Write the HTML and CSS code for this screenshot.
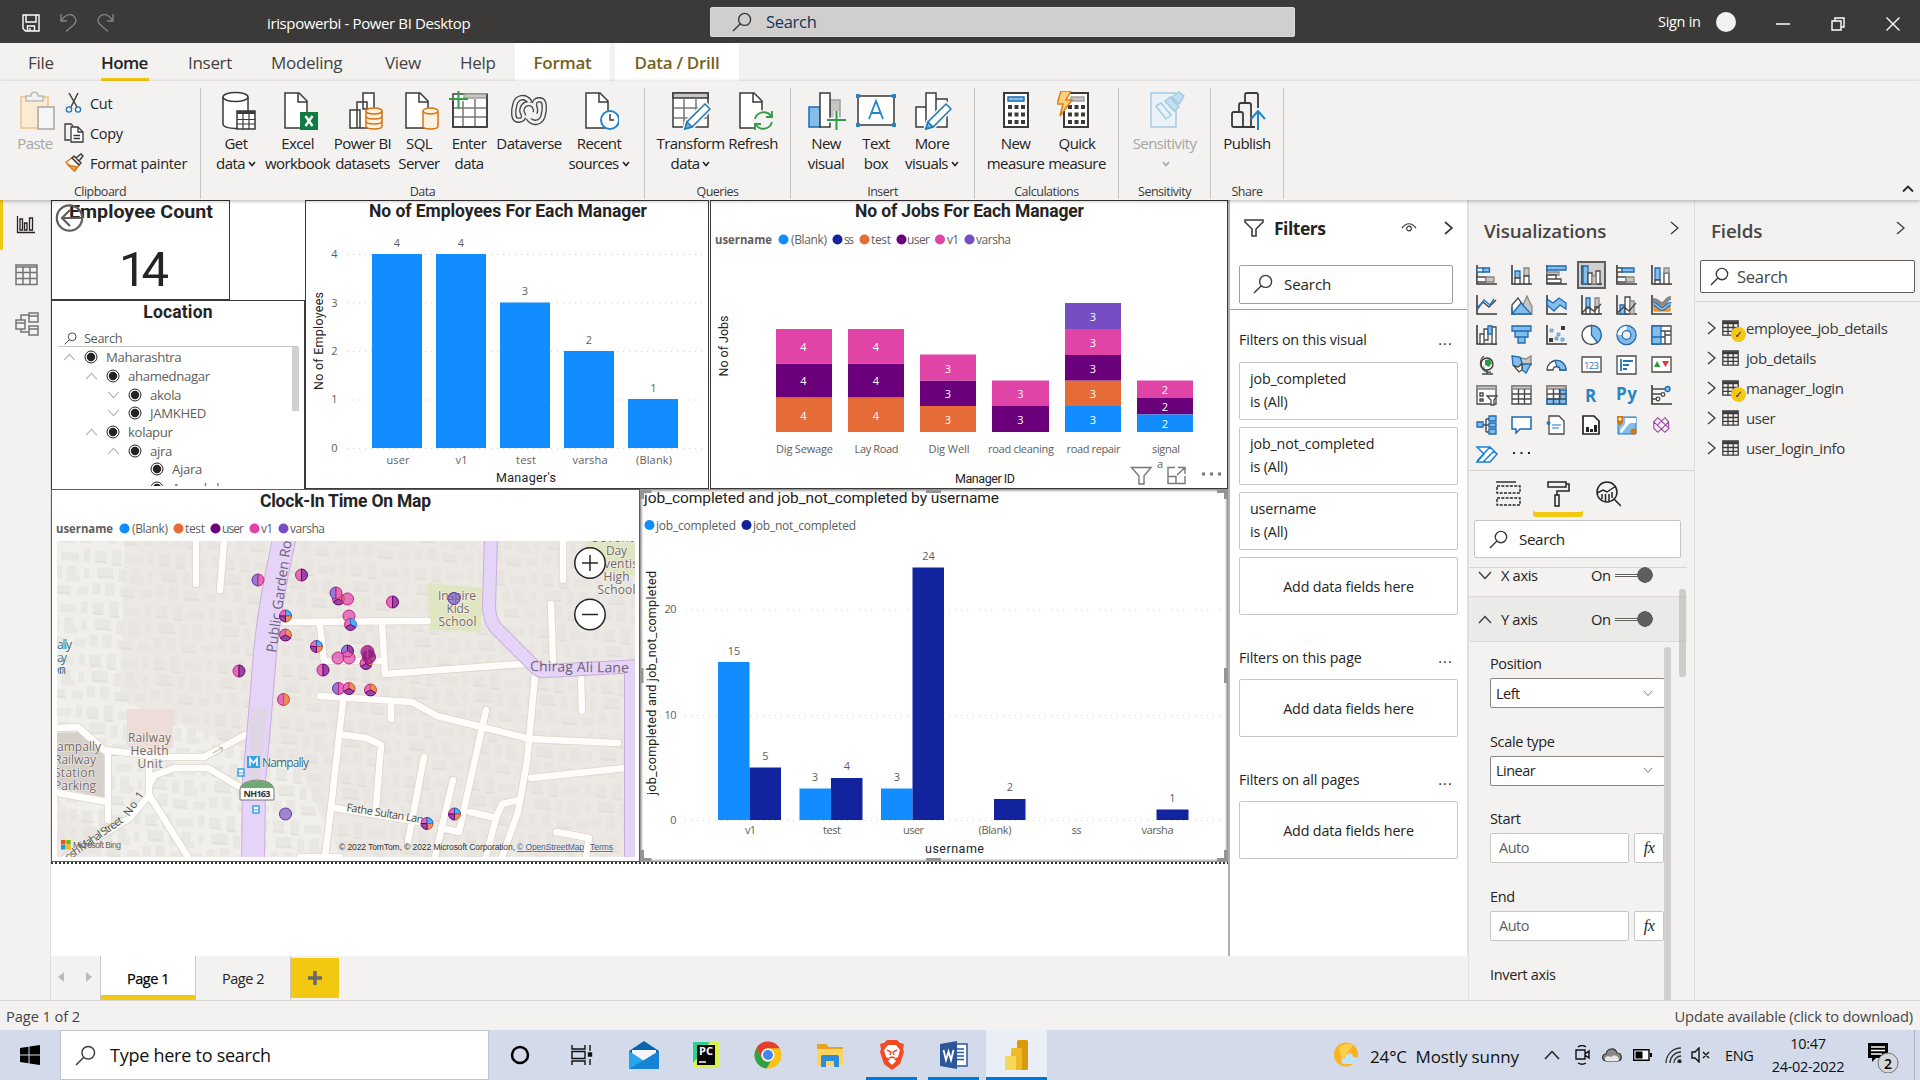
FILE: index.html
```html
<!DOCTYPE html>
<html lang="en">
<head>
<meta charset="utf-8">
<title>irispowerbi - Power BI Desktop</title>
<link rel="stylesheet" href="styles.css">
</head>
<body>
<svg class="defs" width="0" height="0">
  <defs>
    <symbol id="search" viewBox="0 0 20 20"><path d="M1 19L8.6 11.4" /><circle cx="12.6" cy="7.4" r="6" /></symbol>
    <symbol id="right" viewBox="0 0 9 14"><path d="M1 1L8 7L1 13"/></symbol>
    <symbol id="up" viewBox="0 0 14 9"><path d="M1 8L7 1.5L13 8"/></symbol>
    <symbol id="down" viewBox="0 0 14 9"><path d="M1 1L7 7.5L13 1"/></symbol>
    <symbol id="radio" viewBox="0 0 14 14"><circle cx="7" cy="7" r="6" fill="#fff" stroke="#252423" stroke-width="1"/><circle cx="7" cy="7" r="4.2" fill="#252423" stroke="none"/></symbol>
    <symbol id="table" viewBox="0 0 17 16"><path d="M.8 .8H16.2V15.2H.8ZM.8 3.6H16.2M.8 7.5H16.2M.8 11.4H16.2M6 3.6V15M11.2 3.6V15"/><path d="M1 2.2H16" stroke-width="2"/></symbol>
    <symbol id="page" viewBox="0 0 40 40"><path d="M7 2H21L29 10V37H7Z" fill="#fff"/><path d="M20 2V11H29"/></symbol>
    <symbol id="axes" viewBox="0 0 21 20"><path d="M1 0V19H21" stroke="#3b3a39" stroke-width="1.6" fill="none"/></symbol>
    <pattern id="blocks" x="57" y="541" width="64" height="52" patternUnits="userSpaceOnUse" patternTransform="rotate(3)">
      <path d="M3 4h11v10h-11zM20 2h9v14h-9zM34 7h17v8h-17zM56 3h6v12h-6zM6 20h16v9h-16zM28 21h7v13h-7zM40 20h9v9h4v7h-13zM57 22h5v10h-5zM2 36h8v11h-8zM15 35h9v13h-9zM30 40h14v7h-14zM51 41h11v8h-11z" fill="#e7e4de"/>
      <path d="M3 14h11l2 2h-11zM20 16h9l2 2h-9zM6 29h16l2 2h-16zM30 47h14l2 2h-14z" fill="#dedad4"/>
    </pattern>
    <g id="p-v1"><circle r="6" fill="#e044a7" fill-opacity=".7" stroke="#c02287"/></g>
    <g id="p-varsha"><circle r="6" fill="#744ec2" fill-opacity=".65" stroke="#5833a4"/></g>
    <g id="p-v1user"><path d="M0-6A6 6 0 0 0 0 6Z" fill="#e66bb6" stroke="#b52580"/><path d="M0-6A6 6 0 0 1 0 6Z" fill="#97489f" stroke="#6b007b"/></g>
    <g id="p-vv"><path d="M0-6A6 6 0 0 0 0 6Z" fill="#9878d0" stroke="#5833a4"/><path d="M0-6A6 6 0 0 1 0 6Z" fill="#e66bb6" stroke="#b52580"/></g>
    <g id="p-vt"><path d="M0-6A6 6 0 0 0 0 6Z" fill="#e66bb6" stroke="#b52580"/><path d="M0-6A6 6 0 0 1 0 6Z" fill="#ec8c62" stroke="#c65425"/></g>
    <g id="p-tri"><path d="M0 0V-6A6 6 0 0 0-5.2 3Z" fill="#e66bb6" stroke="#b52580"/><path d="M0 0V-6A6 6 0 0 1 5.2 3Z" fill="#ec8c62" stroke="#c65425"/><path d="M0 0L-5.2 3A6 6 0 0 0 5.2 3Z" fill="#97489f" stroke="#6b007b"/></g>
    <g id="p-trib"><path d="M0 0V-6A6 6 0 0 0-5.2 3Z" fill="#e66bb6" stroke="#b52580"/><path d="M0 0V-6A6 6 0 0 1 5.2 3Z" fill="#58a9ff" stroke="#1876d0"/><path d="M0 0L-5.2 3A6 6 0 0 0 5.2 3Z" fill="#97489f" stroke="#6b007b"/></g>
    <g id="p-triv"><path d="M0 0V-6A6 6 0 0 0-5.2 3Z" fill="#9878d0" stroke="#5833a4"/><path d="M0 0V-6A6 6 0 0 1 5.2 3Z" fill="#97489f" stroke="#4b1784"/><path d="M0 0L-5.2 3A6 6 0 0 0 5.2 3Z" fill="#e66bb6" stroke="#b52580"/></g>
    <g id="p-quad"><path d="M0 0V-6A6 6 0 0 0-6 0Z" fill="#e66bb6" stroke="#b52580"/><path d="M0 0V-6A6 6 0 0 1 6 0Z" fill="#58a9ff" stroke="#1260a8"/><path d="M0 0H6A6 6 0 0 1 0 6Z" fill="#ec8c62" stroke="#c65425"/><path d="M0 0H-6A6 6 0 0 0 0 6Z" fill="#97489f" stroke="#6b007b"/></g>
    <g id="p-deep"><circle r="6.5" fill="#8b1a85" fill-opacity=".8" stroke="#a0147c"/><path d="M0-6V6M-6 0A6 6 0 0 1 0-6" stroke="#d03a95" fill="none" stroke-width="1.500"/></g>
  </defs>
</svg>

<div class="app">
  <header class="titlebar">
    <div class="quick">
      <svg width="18" height="18" viewBox="0 0 18 18" stroke="#fff" fill="none" stroke-width="1.4"><path d="M1 1H17V17H3.5L1 14.5ZM4 1V8H14V1M5.5 17V12H12.5V17M8 14V17"/></svg>
      <svg width="17" height="18" viewBox="0 0 17 18" stroke="#85827f" fill="none" stroke-width="1.4"><path d="M1 0V7H7M1.3 6.8C5 1 9-.5 13 1.500C17 4 16.500 8 14 10.500L6 17.500"/></svg>
      <svg width="17" height="18" viewBox="0 0 17 18" stroke="#85827f" fill="none" stroke-width="1.4"><path d="M16 0V7H10M15.700 6.800C12 1 8-.5 4 1.500C0 4 .5 8 3 10.500L11 17.500"/></svg>
    </div>
    <div class="doc-title">irispowerbi - Power BI Desktop</div>
    <div class="top-search"><svg class="ico" width="20" height="20"><use href="#search"/></svg><span>Search</span></div>
    <div class="window">
      <span class="signin">Sign in</span><i class="avatar"></i>
      <svg width="14" height="14" stroke="#fff" fill="none" stroke-width="1.5"><path d="M0 7H14"/></svg>
      <svg width="14" height="14" stroke="#fff" fill="none" stroke-width="1.4"><path d="M1 4H10V13H1ZM4 4V1H13V10H10"/></svg>
      <svg width="14" height="14" stroke="#fff" fill="none" stroke-width="1.4"><path d="M.5 .5L13.500 13.500M13.500 .5L.5 13.500"/></svg>
    </div>
  </header>

  <nav class="tabs">
    <span class="t-file">File</span><span class="t-home">Home</span><span class="t-insert">Insert</span><span class="t-model">Modeling</span><span class="t-view">View</span><span class="t-help">Help</span><span class="ctx t-format">Format</span><span class="ctx t-drill">Data / Drill</span>
  </nav>

  <section class="ribbon">
    <div class="group clipboard">
      <div class="items">
        <div class="item off">
          <svg width="40" height="40" fill="none" stroke-width="1.5"><path d="M6 6H33V37H6Z" fill="#faebd3" stroke="#efcda3" stroke-width="2"/><path d="M11 8V5H16C16 0 23 0 23 5H28V10H11Z" fill="#f3f2f1" stroke="#bdbbb8"/><path d="M23 16H39V38H23Z" fill="#f5f5f5" stroke="#a8a6a4"/></svg>
          <b>Paste</b>
        </div>
        <ul class="small">
          <li><svg width="20" height="20" fill="none" stroke="#3b3a39" stroke-width="1.4"><path d="M5 0L13 14M14 0L7 14"/><circle cx="5" cy="16.500" r="2.600" stroke="#2079b8"/><circle cx="14" cy="16.500" r="2.600" stroke="#2079b8"/></svg>Cut</li>
          <li><svg width="20" height="20" fill="none" stroke="#3b3a39" stroke-width="1.300"><path d="M6 17H1V1H7L9 3"/><path d="M7 4H14L19 9V19H7Z" fill="#fff"/><path d="M14 4V9H19M9.500 12.500H16M9.500 15.500H16"/></svg>Copy</li>
          <li><svg width="20" height="20" fill="none" stroke="#3b3a39" stroke-width="1.400"><path d="M2 9L8 5L15 12L11 18Z" stroke="#e07a1c" fill="#fff"/><path d="M4 12L13 14L10 18Z" fill="#f4a95c" stroke="#e07a1c"/><path d="M8 5L10 3L17 10L15 12ZM12 5L17 1L19 3L15 8"/></svg>Format painter</li>
        </ul>
      </div>
      <footer>Clipboard</footer>
    </div>
    <div class="group data">
      <div class="items">
        <div class="item"><svg class="rb" width="40" height="40"><path d="M7 6V33C7 39 32 39 32 33V6" fill="#fff"/><ellipse cx="19.500" cy="6" rx="12.500" ry="4.500" fill="#fff"/><path d="M21 20H39V38H21Z" fill="#fff"/><path d="M21 21.500H39" stroke-width="3"/><path d="M21 28.500H39M21 33H39M27 22V38M33 22V38" stroke-width="1.200"/></svg><b>Get<br>data<svg class="dd" width="8" height="6"><path d="M1 1L4 4.500L7 1"/></svg></b></div>
        <div class="item"><svg class="rb" width="40" height="40"><use href="#page"/><rect x="22" y="21" width="18" height="18" fill="#107c41" stroke="none"/><path d="M27.500 25L34.500 35M34.500 25L27.500 35" stroke="#fff" stroke-width="2.400"/></svg><b>Excel<br>workbook</b></div>
        <div class="item"><svg class="rb" width="40" height="40"><path d="M20 2H31V18H20ZM14 11H24V37H14ZM7 19H17V37H7Z" fill="#fff"/><g stroke="#d9730d" fill="#fdf1e2"><path d="M23 20V35C23 39 39 39 39 35V20"/><ellipse cx="31" cy="20" rx="8" ry="3"/><path d="M23 25C23 29 39 29 39 25M23 30C23 34 39 34 39 30" fill="none"/></g></svg><b>Power BI<br>datasets</b></div>
        <div class="item"><svg class="rb" width="40" height="40"><use href="#page"/><g stroke="#d9730d" fill="#fdf1e2"><path d="M24 20V35C24 39 39 39 39 35V20"/><ellipse cx="31.500" cy="20" rx="7.500" ry="3"/></g></svg><b>SQL<br>Server</b></div>
        <div class="item"><svg class="rb" width="40" height="40"><path d="M4 3H38V36H4Z" fill="#fff"/><path d="M15 3H38V7H15Z" fill="#c8c6c4" stroke="#a19f9d"/><path d="M4 17H38M4 26H38M14 10V36M26 8V36" stroke="#7a7876"/><path d="M4 10V36H38V3"/><path d="M0 8H19M9.500 0V18" stroke="#2e9e4b" stroke-width="2"/></svg><b>Enter<br>data</b></div>
        <div class="item"><svg class="rb" width="40" height="40"><g fill="none" stroke="#4a4846" stroke-width="5.500"><path d="M21 11C16 4 8 6 6 13C4 20 4 28 8 29C13 30 16 27 14 23A6.800 6.800 0 1 1 26 22"/><path d="M19 27C24 34 32 32 34 25C36 18 36 10 32 9C27 8 24 11 26 16"/></g><g fill="none" stroke="#f3f2f1" stroke-width="2.800"><path d="M21 11C16 4 8 6 6 13C4 20 4 28 8 29C13 30 16 27 14 23A6.800 6.800 0 1 1 26 22C24 26 20 28 16 25"/><path d="M19 27C24 34 32 32 34 25C36 18 36 10 32 9C27 8 24 11 26 16"/></g></svg><b>Dataverse</b></div>
        <div class="item"><svg class="rb" width="40" height="40"><use href="#page"/><circle cx="31" cy="29" r="9" fill="#fff" stroke="#1f86cc" stroke-width="2"/><path d="M31 23V29H35"/></svg><b>Recent<br>sources<svg class="dd" width="8" height="6"><path d="M1 1L4 4.500L7 1"/></svg></b></div>
      </div>
      <footer>Data</footer>
    </div>
    <div class="group queries">
      <div class="items">
        <div class="item"><svg class="rb" width="40" height="40"><path d="M2 2H37V36H2Z" fill="#fff"/><path d="M2 2H37V7H2Z" fill="#c8c6c4"/><path d="M2 17H37M2 27H37M13 7V36M25 7V36" stroke="#7a7876"/><path d="M34 13L39 18L21 36L14 38L16 31Z" fill="#fff" stroke="#f3f2f1" stroke-width="5"/><path d="M34 13L39 18L21 36L14 38L16 31Z" fill="#fff" stroke="#1f78b8"/><path d="M16 31L21 36L14 38Z" fill="#71b2e8" stroke="#1f78b8"/></svg><b>Transform<br>data<svg class="dd" width="8" height="6"><path d="M1 1L4 4.500L7 1"/></svg></b></div>
        <div class="item"><svg class="rb" width="40" height="40"><use href="#page"/><circle cx="30.500" cy="30" r="11" fill="#f3f2f1" stroke="none"/><path d="M22 28A9 9 0 0 1 38 25M39 20V26H33M39 31A9 9 0 0 1 23 34M22 39V33H28" fill="none" stroke="#349a4b" stroke-width="1.800"/></svg><b>Refresh</b></div>
      </div>
      <footer>Queries</footer>
    </div>
    <div class="group insert">
      <div class="items">
        <div class="item"><svg class="rb" width="40" height="40"><path d="M24 9H34V28H24Z" fill="#c8c6c4" stroke="#a19f9d"/><path d="M3 16H14V36H3Z" fill="#83bdec" stroke="#1f6ab0"/><path d="M14 2H24V36H14Z" fill="#fff"/><path d="M21 29H40M30.500 20V39" stroke="#f3f2f1" stroke-width="5"/><path d="M21 29H40M30.500 20V39" stroke="#2e9e4b" stroke-width="2"/></svg><b>New<br>visual</b></div>
        <div class="item"><svg class="rb" width="40" height="40"><path d="M2 5H38V34H2Z" fill="#fff"/><path d="M13 28L20 10L27 28M15.500 22H24.500" fill="none" stroke="#1f86cc" stroke-width="1.800"/><path d="M0 3H4V7H0ZM36 3H40V7H36ZM0 32H4V36H0ZM36 32H40V36H36Z" fill="#1f86cc" stroke="none"/></svg><b>Text<br>box</b></div>
        <div class="item"><svg class="rb" width="40" height="40"><path d="M4 16H14V36H4ZM14 2H24V36H14ZM24 8H35V36H24Z" fill="#fff"/><path d="M34 13L39 18L21 36L14 38L16 31Z" fill="#fff" stroke="#f3f2f1" stroke-width="5"/><path d="M34 13L39 18L21 36L14 38L16 31Z" fill="#fff" stroke="#1f78b8"/><path d="M16 31L21 36L14 38Z" fill="#71b2e8" stroke="#1f78b8"/></svg><b>More<br>visuals<svg class="dd" width="8" height="6"><path d="M1 1L4 4.500L7 1"/></svg></b></div>
      </div>
      <footer>Insert</footer>
    </div>
    <div class="group calc">
      <div class="items">
        <div class="item"><svg class="rb" width="40" height="40"><path d="M8 2H32V36H8Z" fill="#fff" stroke-width="2"/><path d="M12 6H28V10H12Z" fill="#83bdec" stroke="#1f6ab0"/><path d="M12 16H29M12 23.500H29M12 31H29" stroke-width="4" stroke-dasharray="4 2.500"/></svg><b>New<br>measure</b></div>
        <div class="item"><svg class="rb" width="40" height="40"><path d="M7 2H31V36H7Z" fill="#fff" stroke-width="2"/><path d="M14 6H27V10H14Z" fill="#c8c6c4" stroke="#a19f9d"/><path d="M11 16H28M11 23.500H28M11 31H28" stroke-width="4" stroke-dasharray="4 2.500"/><path d="M4 0H14L9 9H15L3 25L6 13H0Z" fill="#fcd17a" stroke="#e07a1c"/></svg><b>Quick<br>measure</b></div>
      </div>
      <footer>Calculations</footer>
    </div>
    <div class="group sens">
      <div class="items">
        <div class="item off"><svg class="rb" width="40" height="40"><g stroke="#a3cbe3" fill="#eaf2f7"><path d="M6 2H31V36H6Z"/><path d="M11 15L16 12L26 24L21 28Z" fill="none"/><path d="M20 10L25 6L34 16L29 20ZM27 6L34 1L39 5L34 13Z" fill="#c5dff0"/></g></svg><b>Sensitivity<br><svg class="dd" width="8" height="6"><path d="M1 1L4 4.500L7 1"/></svg></b></div>
      </div>
      <footer>Sensitivity</footer>
    </div>
    <div class="group share">
      <div class="items">
        <div class="item"><svg class="rb" width="40" height="40"><path d="M18 12V4Q18 2 20 2H29Q31 2 31 4V17M12 20V14Q12 12 14 12H22Q24 12 24 14V36M16 36H7Q5 36 5 34V23Q5 21 7 21H14Q16 21 16 23V36H28" fill="none" stroke-width="1.800"/><path d="M31 39V20M24 28L31 20L38 28" fill="none" stroke="#1f86cc" stroke-width="2"/></svg><b>Publish</b></div>
      </div>
      <footer>Share</footer>
    </div>
    <svg class="collapse" width="12" height="8"><path d="M1 6.500L6 1.500L11 6.500" stroke="#252423" stroke-width="1.800" fill="none"/></svg>
  </section>

  <main class="work">
    <aside class="rail">
      <div class="view on"><svg width="23" height="23" fill="none" stroke="#252423" stroke-width="1.300"><path d="M3.500 3V19.500H21M6 6H8.500V17H6ZM10.500 10H13V17H10.500ZM15.500 5H18.500V17H15.500Z"/></svg></div>
      <div class="view"><svg width="23" height="23" fill="none" stroke="#767472" stroke-width="1.500"><path d="M1 2H22V21.500H1ZM1 4H22M1 9.500H22M1 15.500H22M8 4V21M15 4V21"/></svg></div>
      <div class="view"><svg width="24" height="24" fill="none" stroke="#767472" stroke-width="1.500"><path d="M1 8H10V17H1ZM1 11H10M14 1H23V10H14ZM14 4H23M14 14H23V23H14ZM14 17H23M6 8V3H14M6 17V20H14"/></svg></div>
    </aside>

    <div class="center">
      <div class="stage">
        <div class="canvas">
          <article class="visual count">
            <svg width="178" height="99" viewBox="51 200 178 99">
              <text class="din b" x="69" y="218" textLength="144" lengthAdjust="spacingAndGlyphs">Employee Count</text>
              <text class="big" x="119" y="286" textLength="50">14</text>
              <g fill="none" stroke="#605e5c" stroke-width="2.200"><circle cx="69.500" cy="218" r="12.700"/><path d="M82 218H62M70 210L62 218L70 226" /></g>
            </svg>
          </article>
          <article class="visual location">
            <h3>Location</h3>
            <div class="lsearch"><svg class="ico" width="13" height="13"><use href="#search"/></svg>Search</div>
            <ul class="tree">
              <li class="l1"><svg class="car" width="13" height="8"><use href="#up"/></svg><svg width="14" height="14"><use href="#radio"/></svg>Maharashtra</li>
              <li class="l2"><svg class="car" width="13" height="8"><use href="#up"/></svg><svg width="14" height="14"><use href="#radio"/></svg>ahamednagar</li>
              <li class="l3"><svg class="car" width="13" height="8"><use href="#down"/></svg><svg width="14" height="14"><use href="#radio"/></svg>akola</li>
              <li class="l3"><svg class="car" width="13" height="8"><use href="#down"/></svg><svg width="14" height="14"><use href="#radio"/></svg>JAMKHED</li>
              <li class="l2"><svg class="car" width="13" height="8"><use href="#up"/></svg><svg width="14" height="14"><use href="#radio"/></svg>kolapur</li>
              <li class="l3"><svg class="car" width="13" height="8"><use href="#up"/></svg><svg width="14" height="14"><use href="#radio"/></svg>ajra</li>
              <li class="l4"><svg class="car" width="13" height="8"></svg><svg width="14" height="14"><use href="#radio"/></svg>Ajara</li>
              <li class="l4"><svg class="car" width="13" height="8"></svg><svg width="14" height="14"><use href="#radio"/></svg>Amrabd</li>
            </ul>
            <i class="lbar"></i>
          </article>
          <article class="visual employees">
            <svg width="404" height="289" viewBox="305 200 404 289">
              <text class="din b" x="369" y="217" textLength="278">No of Employees For Each Manager</text>
              <path class="grid" d="M347 254.500H706M347 303H706M347 351.500H706M347 400H706M347 448.500H706"/>
              <path d="M372 254H422V448H372ZM436 254H486V448H436ZM500 302.500H550V448H500ZM564 351H614V448H564ZM628 399H678V448H628Z" fill="#118dff"/>
              <g class="lab m"><text x="334.500" y="258">4</text><text x="334.500" y="307">3</text><text x="334.500" y="355">2</text><text x="334.500" y="403">1</text><text x="334.500" y="452">0</text>
              <text x="397" y="247">4</text><text x="461" y="247">4</text><text x="525" y="295">3</text><text x="589" y="344">2</text><text x="653.500" y="392">1</text>
              <text x="398" y="464" textLength="23">user</text><text x="461.500" y="464" textLength="12">v1</text><text x="526" y="464" textLength="20">test</text><text x="590" y="464" textLength="35">varsha</text><text x="654" y="464" textLength="36">(Blank)</text></g>
              <text class="ax m" x="526" y="482" textLength="60">Manager's</text>
              <text class="ax m" transform="translate(323 341) rotate(-90)" textLength="98">No of Employees</text>
            </svg>
          </article>
          <article class="visual jobs">
            <svg width="518" height="289" viewBox="710 200 518 289">
              <text class="din b" x="855" y="217" textLength="229">No of Jobs For Each Manager</text>
              <text class="leg bb" x="715" y="244" textLength="57" lengthAdjust="spacingAndGlyphs">username</text>
              <circle cx="783.500" cy="239.500" r="5" fill="#118dff"/><text class="leg" x="791" y="244" textLength="36">(Blank)</text>
              <circle cx="837.500" cy="239.500" r="5" fill="#12239e"/><text class="leg" x="844" y="244" textLength="10">ss</text>
              <circle cx="864.500" cy="239.500" r="5" fill="#e66c37"/><text class="leg" x="871" y="244" textLength="20">test</text>
              <circle cx="901.500" cy="239.500" r="5" fill="#6b007b"/><text class="leg" x="907" y="244" textLength="23">user</text>
              <circle cx="940" cy="239.500" r="5" fill="#e044a7"/><text class="leg" x="947" y="244" textLength="12">v1</text>
              <circle cx="969.500" cy="239.500" r="5" fill="#744ec2"/><text class="leg" x="976" y="244" textLength="35">varsha</text>
              <path d="M776 397.500H832V432H776ZM848 397.500H904V432H848ZM920 406H976V432H920ZM1065 380.500H1121V406H1065Z" fill="#e66c37"/>
              <path d="M776 363.500H832V397.500H776ZM848 363.500H904V397.500H848ZM920 380.500H976V406H920ZM992 406H1049V432H992ZM1065 355H1121V380.500H1065ZM1137 398H1193V414.500H1137Z" fill="#6b007b"/>
              <path d="M776 329H832V363.500H776ZM848 329H904V363.500H848ZM920 354.500H976V380.500H920ZM992 380.500H1049V406H992ZM1065 329H1121V355H1065ZM1137 380.500H1193V398H1137Z" fill="#e044a7"/>
              <path d="M1065 406H1121V432H1065ZM1137 414.500H1193V432H1137Z" fill="#118dff"/><path d="M1065 303H1121V329H1065Z" fill="#744ec2"/>
              <g class="lab m w"><text x="803.500" y="351">4</text><text x="803.500" y="385">4</text><text x="803.500" y="420">4</text><text x="876" y="351">4</text><text x="876" y="385">4</text><text x="876" y="420">4</text><text x="948" y="373">3</text><text x="948" y="398">3</text><text x="948" y="424">3</text><text x="1020.500" y="398">3</text><text x="1020.500" y="424">3</text><text x="1093" y="321">3</text><text x="1093" y="347">3</text><text x="1093" y="373">3</text><text x="1093" y="398">3</text><text x="1093" y="424">3</text><text x="1165" y="394">2</text><text x="1165" y="411">2</text><text x="1165" y="428">2</text></g>
              <g class="lab m"><text x="804.500" y="453" textLength="57">Dig Sewage</text><text x="876.500" y="453" textLength="44">Lay Road</text><text x="949" y="453" textLength="41">Dig Well</text><text x="1021" y="453" textLength="66">road cleaning</text><text x="1093.500" y="453" textLength="54">road repair</text><text x="1166" y="453" textLength="28">signal</text></g>
              <text class="ax m" x="985" y="483" textLength="60">Manager ID</text>
              <text class="ax m" transform="translate(728 346) rotate(-90)" textLength="61">No of Jobs</text>
              <g fill="none" stroke="#797775" stroke-width="1.400"><path d="M1131.500 467.500H1151L1144 476V484H1139V476Z"/><path d="M1175 467.500H1168V483.500H1185V476M1168 476.500H1176V483M1178 467.500H1185V474M1185 467.500L1177 475"/></g>
              <text class="lab" x="1157" y="468">a</text><path d="M1202 472.500h3v3h-3zM1210 472.500h3v3h-3zM1218 472.500h3v3h-3z" fill="#797775"/>
            </svg>
          </article>
          <article class="visual map">
            <svg width="588" height="373" viewBox="51 489 588 373">
              <text class="din b" x="260" y="507" textLength="171">Clock-In Time On Map</text>
              <text class="leg bb" x="56" y="533" textLength="57" lengthAdjust="spacingAndGlyphs">username</text>
              <circle cx="124.500" cy="528.500" r="5" fill="#118dff"/><text class="leg" x="132" y="533" textLength="36">(Blank)</text>
              <circle cx="178.500" cy="528.500" r="5" fill="#e66c37"/><text class="leg" x="185" y="533" textLength="20">test</text>
              <circle cx="215.500" cy="528.500" r="5" fill="#6b007b"/><text class="leg" x="222" y="533" textLength="22">user</text>
              <circle cx="254.500" cy="528.500" r="5" fill="#e044a7"/><text class="leg" x="261" y="533" textLength="12">v1</text>
              <circle cx="283.500" cy="528.500" r="5" fill="#744ec2"/><text class="leg" x="290" y="533" textLength="35">varsha</text>
              <svg x="57" y="541" width="578" height="316" viewBox="57 541 578 316">
                <path d="M57 541H635V857H57Z" fill="#f0efeb"/>
                <path d="M125 541H635V857H340L300 770L120 700ZM57 800L100 830L90 857H57Z" fill="#ece9e4"/>
                <path d="M57 541H635V857H57Z" fill="url(#blocks)" opacity=".75"/>
                <path d="M127 709H173V748H127Z" fill="#eedcd9"/><path d="M428 583L484 588L480 632L429 629Z" fill="#e1e6c2"/><path d="M588 541H635V576L590 568Z" fill="#e1e6c2"/>
                <path d="M57 733L78 732L104 752V797L57 788Z" fill="#d6d0cb"/>
                <g fill="none" stroke-linejoin="round" stroke-linecap="round">
                  <path stroke="#ddd5c8" stroke-width="8.200" d="M284 622L428 621M320 625L324 661H380M382 623L385 674L535 663M320 696L412 702L437 716L486 728L530 739L618 743M343 701L331 808L325 857M343 735L367 738L381 745L376 808M335 808L420 822M424 757L408 842M453 780L435 857M486 710L459 832L441 828M535 675L527 762L518 812L502 857M635 767L531 778M470 812L496 818L502 804L518 800M496 818L486 857M556 832L589 838L586 857M563 541V580M551 604L553 661M196 541V584M224 541L220 590M581 678L582 711M391 702V719M300 857H340M57 728L78 727L88 736L104 750L163 757L204 757L245 735M149 795L149 760M149 785L155 775L175 768L208 768L245 790M149 795L130 818L66 857M149 795L188 857M108 752V820M57 793L108 802"/>
                  <path stroke="#fffefc" stroke-width="6.500" d="M284 622L428 621M320 625L324 661H380M382 623L385 674L535 663M320 696L412 702L437 716L486 728L530 739L618 743M343 701L331 808L325 857M343 735L367 738L381 745L376 808M335 808L420 822M424 757L408 842M453 780L435 857M486 710L459 832L441 828M535 675L527 762L518 812L502 857M635 767L531 778M470 812L496 818L502 804L518 800M496 818L486 857M556 832L589 838L586 857M563 541V580M551 604L553 661M196 541V584M224 541L220 590M581 678L582 711M391 702V719M300 857H340M57 728L78 727L88 736L104 750L163 757L204 757L245 735M149 795L149 760M149 785L155 775L175 768L208 768L245 790M149 795L130 818L66 857M149 795L188 857M108 752V820M57 793L108 802"/>
                  <path d="M285 536Q268 610 264 665Q259 730 254 780L253 865" stroke="#c9aedb" stroke-width="24"/><path d="M285 536Q268 610 264 665Q259 730 254 780L253 865" stroke="#e6d3f8" stroke-width="22"/>
                  <path d="M491 536L489 607Q489 618 495 627L536 668Q540 672 546 671L640 666M631 668V865" stroke="#c9aedb" stroke-width="14"/><path d="M491 536L489 607Q489 618 495 627L536 668Q540 672 546 671L640 666M631 668V865" stroke="#e6d3f8" stroke-width="12"/>
                  <path d="M213 753L222 748M219 747L223 748L221 752" stroke="#b9ad98" stroke-width="1"/>
                </g>
                <path d="M251 707H267L260 785H249Z" fill="#e0d5e4"/>
                <g class="mp">
                  <text transform="translate(276 653) rotate(-82)" textLength="113" class="road">Public Garden Ro</text>
                  <text transform="translate(530 671) rotate(1)" textLength="99" class="road">Chirag Ali Lane</text>
                  <text transform="translate(346 811) rotate(9)" textLength="78">Fathe Sultan Lan</text>
                  <text transform="translate(68 861) rotate(-35)" textLength="68">osh Mahal Street</text><text transform="translate(129 817) rotate(-55)" textLength="27">No 1</text>
                  <g class="m poi"><text x="457" y="600" textLength="38">Inspire</text><text x="458" y="613" textLength="23">Kids</text><text x="457.500" y="626" textLength="38">School</text>
                  <text x="617" y="542" textLength="50">Seventh</text><text x="616.500" y="555" textLength="21">Day</text><text x="621" y="568" textLength="34">ventis</text><text x="616.500" y="581" textLength="26">High</text><text x="616.500" y="594" textLength="38">School</text>
                  <text x="149.500" y="742" textLength="43">Railway</text><text x="149.500" y="755" textLength="38">Health</text><text x="150" y="768" textLength="25">Unit</text></g>
                  <g class="poi"><text x="57" y="751" textLength="44">ampally</text><text x="54" y="764" textLength="42">Railway</text><text x="54" y="777" textLength="41">Station</text><text x="54" y="790" textLength="42">Parking</text></g>
                  <g class="teal"><text x="57" y="649" textLength="15">ally</text><text x="57" y="662" textLength="10">ay</text><text x="57" y="674" textLength="9">on</text><text x="262" y="767" textLength="47">Nampally</text></g>
                </g>
                <path d="M247 756h13v12h-13z" fill="#36a3e8"/><path d="M250 766V758.500L253.500 763L257 758.500V766" stroke="#fff" stroke-width="1.600" fill="none"/>
                <path d="M238 769h6v7h-6zM253 806h6v7h-6z" fill="#fff" stroke="#36a3e8" stroke-width="1.500"/><path d="M238 773h6M253 810h6" stroke="#36a3e8"/>
                <path d="M240 800V789Q241 781 257 780Q273 781 274 789V800Z" fill="#fff" stroke="#777"/><path d="M240.500 788Q242 781 257 780.500Q272 781 273.500 788Z" fill="#71a973"/><text class="nh" x="257" y="797" text-anchor="middle" textLength="27">NH163</text>
                <use href="#p-vv" x="258" y="580"/><use href="#p-v1user" x="301.500" y="575"/><use href="#p-tri" x="338.500" y="599"/><use href="#p-vv" x="336" y="593"/><use href="#p-v1" x="347.500" y="599"/><use href="#p-v1user" x="392.500" y="602"/><use href="#p-varsha" x="454" y="598.500"/><use href="#p-quad" x="285.500" y="616"/><use href="#p-v1" x="349" y="616"/><use href="#p-trib" x="350.500" y="624.500"/><use href="#p-tri" x="285.500" y="635"/><use href="#p-quad" x="316.500" y="646.500"/><use href="#p-v1" x="338" y="658"/><use href="#p-v1" x="349" y="658"/><use href="#p-triv" x="347.500" y="651"/><use href="#p-tri" x="366" y="663.500"/><use href="#p-deep" x="369" y="657"/><use href="#p-deep" x="367.500" y="652"/><use href="#p-v1user" x="239" y="671"/><use href="#p-v1user" x="323" y="670"/><use href="#p-vv" x="338.500" y="688.500"/><use href="#p-tri" x="349" y="688.500"/><use href="#p-tri" x="370.500" y="690"/><use href="#p-vt" x="283.500" y="699.500"/><use href="#p-varsha" x="285.500" y="814"/><use href="#p-quad" x="427" y="823.500"/><use href="#p-quad" x="454.500" y="814"/>
                <path d="M61 840h4.500v4.500h-4.500z" fill="#f25022"/><path d="M66.200 840h4.500v4.500h-4.500z" fill="#7fba00"/><path d="M61 845h4.500v4.500h-4.500z" fill="#00a4ef"/><path d="M66.200 845h4.500v4.500h-4.500z" fill="#ffb900"/>
                <text class="tiny" x="73" y="848" textLength="48">Microsoft Bing</text>
                <text class="tiny k" x="339" y="850" textLength="176">© 2022 TomTom, © 2022 Microsoft Corporation,</text><text class="tiny u" x="517" y="850" textLength="67">© OpenStreetMap</text><text class="tiny u" x="590" y="850" textLength="23">Terms</text>
                <g fill="#fff" stroke="#252423" stroke-width="1.500"><circle cx="590" cy="563" r="15.200"/><circle cx="590" cy="614.500" r="15.200"/><path d="M582 563H598M590 555V571M582 614.500H598"/></g>
              </svg>
            </svg>
          </article>
          <article class="visual clustered">
            <svg width="588" height="373" viewBox="640 489 588 373">
              <path d="M641.500 490.500H1226.500V860.500H641.500Z" fill="none" stroke="#c8c8c8" stroke-width="2"/>
              <text class="din" x="644" y="503" textLength="355">job_completed and job_not_completed by username</text>
              <circle cx="649.500" cy="525" r="5" fill="#118dff"/><text class="leg" x="656" y="530" textLength="80">job_completed</text>
              <circle cx="746.500" cy="525" r="5" fill="#12239e"/><text class="leg" x="753" y="530" textLength="103">job_not_completed</text>
              <path class="grid" d="M685 610H1222M685 715.500H1222M685 820.500H1222"/>
              <path d="M718 662H749.500V820H718ZM799.500 788.500H831V820H799.500ZM881 788.500H912.500V820H881Z" fill="#118dff"/>
              <path d="M749.500 767.500H781V820H749.500ZM831 778H862.500V820H831ZM912.500 567.500H944V820H912.500ZM994 799H1025.500V820H994ZM1156.500 809.500H1188.500V820H1156.500Z" fill="#12239e"/>
              <g class="lab m"><text x="670.500" y="613" textLength="12">20</text><text x="670.500" y="719" textLength="12">10</text><text x="673.500" y="824">0</text>
              <text x="734" y="655">15</text><text x="765.500" y="760">5</text><text x="815" y="781">3</text><text x="847" y="770">4</text><text x="897" y="781">3</text><text x="928.500" y="560">24</text><text x="1010" y="791">2</text><text x="1172.500" y="802">1</text>
              <text x="750.500" y="834" textLength="11">v1</text><text x="832" y="834" textLength="18">test</text><text x="913.500" y="834" textLength="21">user</text><text x="995" y="834" textLength="33">(Blank)</text><text x="1076.500" y="834" textLength="10">ss</text><text x="1157.500" y="834" textLength="32">varsha</text></g>
              <text class="ax m" x="954.500" y="853" textLength="59">username</text>
              <text class="ax m" transform="translate(656 683) rotate(-90)" textLength="224">job_completed and job_not_completed</text>
              <path fill="none" stroke="#979593" stroke-width="3" d="M642.500 499V491.500H651.500M926 491.500H941M1217 491.500H1225.500V499M642 668V683M1225.500 668V683M642.500 850V859.500H651.500M926 859.500H941M1217 859.500H1225.500V850"/>
            </svg>
          </article>
          <i class="page-edge"></i>
        </div>

        <aside class="filters">
          <header><svg width="20" height="18" fill="none" stroke="#3b3a39" stroke-width="1.600"><path d="M1 1H19V3L12 10V17H8V10L1 3Z"/></svg><h2>Filters</h2>
            <svg width="16" height="12" fill="none" stroke="#3b3a39" stroke-width="1.200"><path d="M1 6Q8-2.500 15 6"/><circle cx="8" cy="6.500" r="2.300"/></svg><svg class="chev" width="9" height="14"><use href="#right"/></svg></header>
          <div class="fsearch"><svg class="ico" width="20" height="20"><use href="#search"/></svg>Search</div>
          <div class="fbody">
            <h4>Filters on this visual<i>...</i></h4>
            <div class="card">job_completed<br>is (All)</div>
            <div class="card">job_not_completed<br>is (All)</div>
            <div class="card">username<br>is (All)</div>
            <div class="card add">Add data fields here</div>
            <h4 class="next">Filters on this page<i>...</i></h4>
            <div class="card add">Add data fields here</div>
            <h4 class="next">Filters on all pages<i>...</i></h4>
            <div class="card add">Add data fields here</div>
          </div>
        </aside>
      </div>
      <div class="pages">
        <span class="arrows"><svg width="7" height="10"><path d="M6 0V10L0 5Z"/></svg><svg width="7" height="10"><path d="M1 0V10L7 5Z"/></svg></span>
        <span class="pg on">Page 1</span><span class="pg">Page 2</span>
        <span class="plus"><svg width="14" height="14"><path d="M7 0V14M0 7H14" stroke="#6b6967" stroke-width="3.500"/></svg></span>
      </div>
    </div>

    <aside class="viz">
      <header><h2>Visualizations</h2><svg class="chev" width="9" height="14"><use href="#right"/></svg></header>
      <div class="gallery">
        <svg><use href="#axes"/><path class="bl hollow" d="M1 3H7.500V7H1Z"/><path class="bl" d="M7 3H13.500V7H7Z"/><path class="wh" d="M1 12H10V17H1Z"/><path class="gr" d="M10 12H18V17H10Z"/></svg>
        <svg><use href="#axes"/><path class="bl" d="M4 6H9V13H4Z"/><path class="wh" d="M4 13H9V19H4Z"/><path class="gr" d="M13 3H18V11H13Z"/><path class="wh" d="M13 11H18V19H13Z"/></svg>
        <svg><use href="#axes"/><path class="bl" d="M1 1H20V5H1Z"/><path class="gr" d="M1 7H13V10H1Z"/><path class="wh" d="M1 10H10V14H1ZM1 14H15V18H1Z"/></svg>
        <svg class="sel"><use href="#axes"/><path class="bl" d="M2 1H7V19H2Z"/><path class="wh" d="M7 8H11V19H7ZM15 6H19V19H15Z"/><path class="gr" d="M11 11H15V19H11Z"/></svg>
        <svg><use href="#axes"/><path class="wh" d="M1 3H6V7H1ZM1 12H10V17H1Z"/><path class="bl" d="M6 3H18V7H6Z"/><path class="gr" d="M10 12H18V17H10Z"/></svg>
        <svg><use href="#axes"/><path class="bl" d="M4 3H9V15H4Z"/><path class="wh" d="M4 15H9V19H4ZM13 8H18V19H13Z"/><path class="gr" d="M13 3H18V8H13Z"/></svg>

        <svg><use href="#axes"/><path class="ln" d="M1 13L7 7L13 12L20 5"/><path d="M1 15L8 5L14 10L18 4" fill="none" stroke="#1f78c1" stroke-width="1.500"/></svg>
        <svg><path class="gr" d="M8 19L16 1L21 12V19Z"/><path class="wh" d="M1 10L7 3L12 10L4 19H1Z"/><path class="bl" d="M1 19L10 8L20 19ZM1 12V19"/></svg>
        <svg><use href="#axes"/><path class="bl" d="M1 4L7 8L13 3L20 8V14L14 10L8 16L1 10Z"/></svg>
        <svg><use href="#axes"/><path class="bl" d="M5 3H9V15H5Z"/><path class="gr" d="M14 3H18V12H14Z"/><path class="wh" d="M5 13H9V19H5ZM14 12H18V19H14Z"/><path class="ln" d="M1 18L7 12L13 16L20 9"/></svg>
        <svg><use href="#axes"/><path class="bl" d="M4 10H9V19H4Z"/><path class="wh" d="M9 2H14V19H9Z"/><path class="gr" d="M14 6H18V19H14Z"/><path class="ln" d="M1 18L8 12L13 16L20 8"/></svg>
        <svg><use href="#axes"/><path class="or" d="M3 11H19V16H3Z"/><path d="M2 5C7 4 7 9 11 9S15 3 20 3" stroke="#8a8886" stroke-width="4" fill="none"/><path d="M2 9C6 8 7 14 11 14S16 8 20 9" stroke="#1f6ab0" stroke-width="4" fill="none"/><path d="M2 9C6 8 7 14 11 14S16 8 20 9" stroke="#83bdec" stroke-width="1.800" fill="none"/></svg>

        <svg><use href="#axes"/><path class="wh" d="M4 9H8V19H4ZM8 4H12V15H8ZM16 2H20V19H16Z"/><path class="bl" d="M12 1H16V9H12Z"/></svg>
        <svg><path class="bl" d="M1 1H20V6H1ZM4 6H17V12H4ZM7 12H14V18H7Z"/></svg>
        <svg><use href="#axes"/><path d="M3 13h4v4h-4zM15 1h4v4h-4z" fill="#3b3a39"/><path d="M4 4h3v3h-3zM11 8h3v3h-3zM15 13h3v3h-3zM9 12h3v3h-3z" fill="#8fc1ea" stroke="#1f78c1" stroke-width=".5"/></svg>
        <svg><circle class="wh" cx="10.500" cy="10" r="9.500"/><path class="bl" d="M10.500 .5A9.500 9.500 0 0 1 16.500 17.500L10.500 10Z"/></svg>
        <svg><circle cx="10.500" cy="10" r="7" fill="none" stroke="#1f6ab0" stroke-width="6.500"/><circle cx="10.500" cy="10" r="7" fill="none" stroke="#83bdec" stroke-width="4"/><path d="M10.500 3A7 7 0 0 0 3.500 10" fill="none" stroke="#fff" stroke-width="4"/></svg>
        <svg><path class="wh" d="M1 1H20V19H1Z"/><path class="bl" d="M1 1H10V12H1ZM1 12H10V19H1Z"/><path class="ln" d="M10 6H20M14 6V19M10 12H14M14 10H20"/></svg>

        <svg><circle cx="11" cy="9" r="6" fill="#fff" stroke="#3b3a39" stroke-width="1.400"/><path d="M9 5L14 4L16 8L13 12L9 10ZM7 10L9 13L8 14Z" fill="#2d9a4a"/><path d="M8 1A9 9 0 0 0 15 17M11 15V19M6 19H17" class="ln"/></svg>
        <svg><path class="gr" d="M10 3L15 4L20 1V10H11Z"/><path class="bl" d="M1 1L9 2L11 8L7 13L2 10ZM11 9H20L15 18L11 15Z"/><path class="wh" d="M3 11L7 12L11 9V15L8 17Z"/></svg>
        <svg><path class="wh" d="M1 15A9.500 9.500 0 0 1 20 15H14A3.500 3.500 0 0 0 7 15Z"/><path class="bl" d="M9 5.500A9.500 9.500 0 0 1 20 15H14A3.500 3.500 0 0 0 11 11.500Z"/></svg>
        <svg><path class="wh" d="M1 2H20V17H1Z"/><text x="10.500" y="13.500" text-anchor="middle" class="n123" textLength="15">123</text></svg>
        <svg><path class="wh" d="M1 1H20V19H1Z"/><path d="M5 4V16M7 6H17M7 10H13M7 14H11" stroke="#1f78c1" stroke-width="1.800"/></svg>
        <svg><path class="wh" d="M1 2H20V17H1Z"/><path d="M3 12L6 6L9.500 12Z" fill="#2d9a4a"/><path d="M11 6H18L14.500 12Z" fill="#e0373c"/></svg>

        <svg><path class="wh" d="M1 1H20V19H1Z"/><path class="gr" d="M1 1H20V4H1Z"/><path class="ln" d="M4 8h3v3h-3zM4 14h3v2h-3z"/><path class="wh" d="M11 11H21L18 15V20H15V15Z"/></svg>
        <svg><path class="wh" d="M1 1H20V19H1Z"/><path class="gr" d="M1 1H20V4H1Z"/><path class="ln" d="M1 9H20M1 14H20M7.500 4V19M13.500 4V19"/></svg>
        <svg><path class="wh" d="M1 1H20V19H1Z"/><path class="bl" d="M14 5H20V19H1V14H14Z"/><path class="gr" d="M1 1H20V4H1Z"/><path class="ln" d="M1 9H20M1 14H20M7.500 4V19M13.500 4V19"/></svg>
        <svg><text x="4" y="17" class="ry" textLength="12">R</text></svg>
        <svg><text x="0" y="15" class="ry" textLength="21">Py</text></svg>
        <svg><use href="#axes"/><path d="M1 4H15M1 9H10M1 14H5" class="ln" /><circle cx="16.500" cy="4" r="2.500" class="bl"/><circle cx="12" cy="9.500" r="1.800" class="wh"/><circle cx="7" cy="14" r="1.800" class="wh"/></svg>

        <svg><path d="M7 10H13M10 4H13M10 4V17M10 17H13" class="ln"/><path class="bl" d="M1 7H7V12H1ZM13 1H20V6H13ZM13 8H20V12H13ZM13 14H20V19H13Z"/></svg>
        <svg><path d="M1 2H20V14H9L5 18V14H1Z" fill="#fff" stroke="#1f6ab0" stroke-width="1.500"/></svg>
        <svg><path class="wh" d="M3 1H13L18 6V19H3Z"/><circle cx="2.500" cy="8" r="2" fill="#1f78c1"/><path d="M6 10H15M6 13H13" stroke="#1f78c1" stroke-width="1.200"/></svg>
        <svg><path d="M2 1H13L18 6V19H2Z" fill="#fff" stroke="#252423" stroke-width="1.700"/><path d="M5 12h3v5h-3zM9 14h3v3h-3zM13 10h3v7h-3z" fill="#252423"/></svg>
        <svg><path d="M2 2H20V19H2Z" fill="#83bdec" stroke="#1f78c1"/><path d="M5 19L11 11L14 8H20V3H9V9L4 15Z" fill="#fff"/><path d="M1 1H7V7L4 11L1 7Z" fill="#d9730d"/><circle cx="4" cy="4" r="1.500" fill="#fff"/><circle cx="17.500" cy="16.500" r="3" fill="#d9730d"/></svg>
        <svg><path d="M10.500 5L6 .8L1 6V14L6 19.200L15 10.800L19.500 6L15 .8L6 9.500M10.500 5L20 14L15 19.200L1 6M19.500 6V14" fill="none" stroke="#9a3ea5" stroke-width="1.300" transform="translate(2 2) scale(.8)"/></svg>

        <svg><path d="M1 2H14L21 9L14 17H1L8 9ZM1 16L14 2M7 17L18 6" fill="#fff" stroke="#1a7fd6" stroke-width="1.500"/></svg>
        <svg><path d="M2 7h2v2h-2zM9.500 7h2v2h-2zM17 7h2v2h-2z" fill="#252423"/></svg>
      </div>
      <div class="modes">
        <span><svg width="25" height="26" fill="none" stroke="#252423" stroke-width="1.400"><path d="M0 1H20"/><path d="M1 5H24V12H1ZM1 17H24V24H1Z" stroke-dasharray="3 1.300"/></svg></span>
        <span class="on"><svg width="25" height="26" fill="none" stroke="#252423" stroke-width="1.500"><path d="M2 1H20V6H2ZM20 3H23V10H11V14M9 14H13V25H9Z"/></svg></span>
        <span><svg width="25" height="26" fill="none" stroke="#252423" stroke-width="1.500"><circle cx="11" cy="11" r="10"/><path d="M18 18L25 25M1 12L7 9L11 11L20 5M6 13V18M9.500 13V20M13 13V20M16 11V17"/></svg></span>
      </div>
      <div class="vsearch"><svg class="ico" width="19" height="19"><use href="#search"/></svg>Search</div>
      <div class="props">
        <div class="axis x"><svg class="chev" width="14" height="9"><use href="#down"/></svg><span>X axis</span><em>On</em><i class="toggle"></i></div>
        <div class="axis y"><svg class="chev" width="14" height="9"><use href="#up"/></svg><span>Y axis</span><em>On</em><i class="toggle"></i></div>
        <div class="form">
          <label>Position</label><div class="select">Left<svg width="10" height="7"><path d="M1 1L5 5.500L9 1"/></svg></div>
          <label>Scale type</label><div class="select">Linear<svg width="10" height="7"><path d="M1 1L5 5.500L9 1"/></svg></div>
          <label>Start</label><div class="pair"><div class="input">Auto</div><div class="fx">fx</div></div>
          <label>End</label><div class="pair"><div class="input">Auto</div><div class="fx">fx</div></div>
          <label>Invert axis</label>
        </div>
        <i class="bar inner"></i><i class="bar outer"></i>
      </div>
    </aside>

    <aside class="fields">
      <header><h2>Fields</h2><svg class="chev" width="9" height="14"><use href="#right"/></svg></header>
      <div class="dsearch"><svg class="ico" width="19" height="19"><use href="#search"/></svg>Search</div>
      <ul>
        <li><svg class="chev" width="9" height="14"><use href="#right"/></svg><span class="tb used"><svg width="17" height="16"><use href="#table"/></svg></span>employee_job_details</li>
        <li><svg class="chev" width="9" height="14"><use href="#right"/></svg><span class="tb"><svg width="17" height="16"><use href="#table"/></svg></span>job_details</li>
        <li><svg class="chev" width="9" height="14"><use href="#right"/></svg><span class="tb used"><svg width="17" height="16"><use href="#table"/></svg></span>manager_login</li>
        <li><svg class="chev" width="9" height="14"><use href="#right"/></svg><span class="tb"><svg width="17" height="16"><use href="#table"/></svg></span>user</li>
        <li><svg class="chev" width="9" height="14"><use href="#right"/></svg><span class="tb"><svg width="17" height="16"><use href="#table"/></svg></span>user_login_info</li>
      </ul>
    </aside>
  </main>

  <footer class="status"><span>Page 1 of 2</span><span>Update available (click to download)</span></footer>

  <div class="taskbar">
    <div class="start"><svg width="20" height="20"><path d="M0 3L8.500 1.800V9.500H0ZM9.500 1.600L20 0V9.500H9.500ZM0 10.500H8.500V18.200L0 17ZM9.500 10.500H20V20L9.500 18.400Z"/></svg></div>
    <div class="tsearch"><svg class="ico" width="21" height="21"><use href="#search"/></svg>Type here to search</div>
    <div class="apps">
      <span><svg width="22" height="22"><circle cx="11" cy="11" r="8" fill="none" stroke="#000" stroke-width="2.500"/></svg></span>
      <span><svg width="22" height="22" fill="none" stroke="#111" stroke-width="1.400"><path d="M1 1V5H14V1M1 21V17H14V21M1 7.500H14V14.500H1ZM19 1V7M19 15V21"/><path d="M17.500 9h3v3h-3z" fill="#111"/></svg></span>
      <span><svg width="30" height="30"><path d="M0 11L15 1L30 11V15H0Z" fill="#0a64ad"/><path d="M3 10H27V24H3Z" fill="#f3f6fa"/><path d="M0 11L15 21L30 11V29H0Z" fill="#27a4ea"/><path d="M0 29L30 11V29Z" fill="#1683d4"/></svg></span>
      <span><svg width="28" height="28"><path d="M1 1H27V27H1Z" fill="#d9f24b"/><path d="M1 1H18L1 22Z" fill="#27d192"/><path d="M5 4H23V24H5Z" fill="#070707"/><text x="7" y="13.500" class="pc" textLength="14" lengthAdjust="spacingAndGlyphs">PC</text><path d="M7 21H14" stroke="#fff" stroke-width="1.500"/></svg></span>
      <span><svg width="28" height="28"><circle cx="14" cy="14" r="13.500" fill="#fbc116"/><path d="M2.300 7.300A13.500 13.500 0 0 1 25.700 7.300H14A6.700 6.700 0 0 0 8 17.400Z" fill="#e23f33"/><path d="M2.300 7.300L8.200 17.400A6.700 6.700 0 0 0 17 20L12.500 27.500A13.500 13.500 0 0 1 2.300 7.300Z" fill="#2da14c"/><circle cx="14" cy="14" r="6.500" fill="#fff"/><circle cx="14" cy="14" r="5" fill="#4285f4"/></svg></span>
      <span><svg width="28" height="28"><path d="M1 3H10L13 6H27V22H1Z" fill="#e9a21b"/><path d="M1 8H27V24H1Z" fill="#fbd35d"/><path d="M5 26V16Q5 14 7 14H21Q23 14 23 16V26H18V20H10V26Z" fill="#2d8ddb"/></svg></span>
      <span class="run"><svg width="26" height="30"><path d="M5 3L8 0H18L21 3L25 4L24 9L25 12L21 24L13 30L5 24L1 12L2 9L1 4Z" fill="#f44a24"/><path d="M13 5L17 5L21 10L19 17L15 19L17 21L13 25L9 21L11 19L7 17L5 10L9 5Z" fill="#fff"/><path d="M8 10L12 12L11 15M18 10L14 12L15 15M10 18L13 17L16 18" stroke="#f44a24" fill="none" stroke-width="1.400"/></svg></span>
      <span class="run"><svg width="28" height="28"><path d="M12 3H27V25H12Z" fill="#fff" stroke="#2b579a" stroke-width="1.500"/><path d="M16 8H24M16 11.500H24M16 15H24M16 18.500H24" stroke="#2b579a" stroke-width="1.500"/><path d="M0 3L17 0V28L0 25Z" fill="#2b579a"/><path d="M3.500 9L6 19L8.500 10.500L11 19L13.500 9" fill="none" stroke="#fff" stroke-width="1.900"/></svg></span>
      <span class="run cur"><svg width="24" height="30"><rect x="12" y="0" width="11" height="30" rx="1.500" fill="#d99a0c"/><rect x="6" y="8" width="11" height="22" rx="1.500" fill="#eebb26"/><rect x="0" y="16" width="11" height="14" rx="1.500" fill="#f7d95a"/></svg></span>
    </div>
    <div class="tray">
      <svg class="sun" width="26" height="26"><circle cx="13" cy="12.500" r="12" fill="#fbb41f"/><path d="M6 6A12 12 0 0 1 20 3L9 18Z" fill="#ffd04f"/><path d="M11 22C7 22 8 15 12 16C13 10 20 10 20 15C26 14 27 22 22 22Z" fill="#bfe3fa"/></svg>
      <span class="wx">24°C&nbsp; Mostly sunny</span>
      <svg class="s-up" width="16" height="10" fill="none" stroke="#222" stroke-width="1.500"><path d="M1 9L8 1.500L15 9"/></svg>
      <svg class="s-cam" width="16" height="20" fill="none" stroke="#111" stroke-width="1.400"><path d="M1 5H10V14H1ZM10 9L14 6V13L10 10M3 2Q7-1 11 2M3 18Q7 20.500 11 18"/></svg>
      <svg class="s-cloud" width="20" height="16"><path d="M4 14C-1 13 0 7 4 7C5 1 13 0 15 6C20 6 21 13 16 14Z" fill="#8a8886" stroke="#333" stroke-width="1.200"/><path d="M4 14C1 11 5 8 9 10C12 7 17 9 17 13L16 14Z" fill="#e8e8e8"/></svg>
      <svg class="s-bat" width="19" height="12"><path d="M.7 .7H16V11.300H.7Z" fill="#fff" stroke="#000" stroke-width="1.400"/><path d="M2.500 2.500h7v7h-7zM17 4h2v4h-2z"/></svg>
      <svg class="s-wifi" width="17" height="16" fill="none" stroke="#333" stroke-width="1.300"><path d="M1 16A15 15 0 0 1 16 1M5 16A11 11 0 0 1 16 5M9 16A7 7 0 0 1 16 9"/><circle cx="14.500" cy="14.500" r="1.500" fill="#000"/></svg>
      <svg class="s-vol" width="20" height="16" fill="none" stroke="#111" stroke-width="1.400"><path d="M1 5H4L8 1V15L4 11H1ZM12 5L18 11M18 5L12 11"/></svg>
      <span class="eng">ENG</span>
      <span class="clock">10:47<br>24-02-2022</span>
      <svg class="note" width="36" height="36"><path d="M2 6H22V21H10L6 25V21H2Z"/><path d="M5 10H19M5 13.500H19M5 17H16" stroke="#fff" stroke-width="1.300"/><circle cx="22" cy="26" r="10" fill="#d5d7da" stroke="#777"/><text x="22" y="31.500" text-anchor="middle" class="two">2</text></svg>
    </div>
  </div>
</div>
</body>
</html>
```
FILE: styles.css
```css
* { box-sizing: border-box; }
body { margin: 0; font-family: "Open Sans", "Noto Sans", sans-serif; font-size: 14px; color: #252423; letter-spacing: -0.4px; }
ul { list-style: none; margin: 0; padding: 0; }
h2, h3, h4 { margin: 0; }
svg { flex: none; display: block; }
.defs { position: absolute; }
.app { width: 1920px; height: 1080px; display: grid; grid-template-columns: 1920px; grid-template-rows: 43px 38px 119px 800px 30px 50px; background: #f3f2f1; overflow: hidden; }
.ico { fill: none; stroke: #3b3a39; stroke-width: 1.4; }
.chev { fill: none; stroke: #3b3a39; stroke-width: 1.3; }

/* title bar */
.titlebar { background: #3b3a38; color: #fff; display: grid; grid-template-columns: 267px 443px 585px 1fr; align-items: center; }
.quick { display: flex; gap: 20px; padding: 3px 0 0 22px; }
.doc-title { font-size: 15px; letter-spacing: -0.38px; padding-top: 3px; }
.top-search { height: 30px; background: #d0cfcd; border: 1px solid #dcdbd9; border-radius: 2px; display: flex; align-items: center; gap: 14px; padding-left: 21px; color: #16325c; font-size: 16.5px; letter-spacing: -0.3px; }
.window { display: flex; align-items: center; padding-left: 363px; }
.signin { font-size: 14.5px; width: 58px; letter-spacing: -0.3px; }
.avatar { width: 20px; height: 20px; border-radius: 50%; background: #f3f2f1; margin-right: 40px; }
.window svg { margin-right: 41px; margin-top: 4px; }
.window svg:last-child { margin-right: 0; }

/* ribbon tabs */
.tabs { display: flex; font-size: 17px; color: #444240; line-height: 39px; letter-spacing: -0.3px; white-space: nowrap; }
.t-file { width: 73px; margin-left: 28px; }
.t-home { width: 48px; margin-right: 39px; font-weight: 600; color: #252423; box-shadow: inset 0 -3px #f2c811; letter-spacing: -0.6px; }
.t-insert { width: 83px; }
.t-model { width: 114px; }
.t-view { width: 75px; }
.t-help { width: 55px; }
.ctx { background: #fff; color: #75621d; font-weight: 600; text-align: center; }
.t-format { width: 95px; margin-right: 5px; }
.t-drill { width: 124px; }

/* ribbon */
.ribbon { display: flex; padding-top: 7px; box-shadow: 0 1px 4px rgba(0,0,0,.3); z-index: 2; position: relative; background: #f3f2f1; }
.group { height: 111px; border-right: 1px solid #c8c6c4; display: flex; flex-direction: column; justify-content: space-between; padding-top: 3px; }
.group footer { text-align: center; font-size: 12.5px; line-height: 14px; color: #3b3a39; letter-spacing: -0.5px; }
.items { display: grid; }
.item { display: flex; flex-direction: column; align-items: center; }
.item b { font-weight: 400; font-size: 15px; line-height: 20px; text-align: center; white-space: nowrap; margin-top: 2px; letter-spacing: -0.58px; }
.item.off { color: #a8a6a4; }
.rb { stroke: #3b3a39; stroke-width: 1.5; fill: none; }
.dd { display: inline-block; fill: none; stroke: currentColor; stroke-width: 1.6; margin-left: 3px; vertical-align: 2px; }
.clipboard { width: 201px; }
.clipboard .items { grid-template-columns: 65px 1fr; height: 86px; }
.clipboard .item { padding-left: 5px; }
.small { margin-top: -3px; }
.small li { height: 30px; display: flex; align-items: center; gap: 6px; font-size: 14.5px; letter-spacing: -0.3px; white-space: nowrap; }
.small li svg { margin-left: -1px; }
.data { width: 444px; }
.data .items { padding-left: 5px; grid-template-columns: 60px 63px 67px 46px 54px 66px 74px; }
.queries { width: 146px; }
.queries .items { padding-left: 9px; grid-template-columns: 73px 52px; }
.insert { width: 184px; }
.insert .items { padding-left: 10px; grid-template-columns: 50px 50px 62px; }
.calc { width: 144px; }
.calc .items { padding-left: 10px; grid-template-columns: 61px 62px; }
.sens { width: 92px; }
.share { width: 73px; }
.collapse { margin: 97px 6px 0 auto; }

/* workspace */
.work { display: grid; grid-template-columns: 51px 1417px 227px 225px; min-height: 0; }
.rail { border-right: 1px solid #e1dfdd; }
.view { height: 50px; display: flex; align-items: center; padding: 0 0 2px 15px; }
.view.on { box-shadow: inset 3px 0 #f2c811; padding-left: 14px; }
.center { display: grid; grid-template-rows: 756px 44px; }
.stage { display: grid; grid-template-columns: 1177px 240px; background: #fff; }
.canvas { position: relative; background: #fff; overflow: hidden; }
.visual { position: absolute; border: 1px solid #3b3a39; background: #fff; overflow: hidden; }
.visual > svg { margin: -1px; }
.count { left: 0; top: 0; width: 179px; height: 100px; }
.location { left: 0; top: 100px; width: 254px; height: 190px; }
.employees { left: 254px; top: 0; width: 404px; height: 289px; }
.jobs { left: 659px; top: 0; width: 518px; height: 289px; }
.map { left: 0; top: 289px; width: 589px; height: 373px; border-color: #605e5c; }
.clustered { left: 589px; top: 289px; width: 588px; height: 373px; border-color: #979593; }
.page-edge { position: absolute; left: 0; right: 0; top: 662px; height: 2px; background: repeating-linear-gradient(90deg, #333 0 2px, #fff 2px 4px); }
svg text { letter-spacing: 0; }
.din { font-family: Roboto, sans-serif; font-size: 15.5px; fill: #252423; }
.din.b { font-size: 17.5px; font-weight: 700; }
.big { font-family: Roboto, sans-serif; font-size: 49px; fill: #252423; }
.m { text-anchor: middle; }
.ax { font-family: Roboto, sans-serif; font-size: 12.500px; fill: #252423; }
.lab { font-size: 11px; fill: #605e5c; }
.lab.w { fill: #fff; }
.leg { font-size: 12px; fill: #605e5c; }
.bb { font-weight: 700; }
.grid { stroke: #d0cecc; stroke-width: 1; stroke-dasharray: 1 5; fill: none; }
.location h3 { font: 700 17.5px/23px Roboto, sans-serif; text-align: center; letter-spacing: 0.15px; }
.lsearch { display: flex; align-items: center; gap: 7px; height: 23px; margin: 0 6px; padding: 6px 0 0 6px; border-bottom: 1px solid #c8c6c4; color: #605e5c; font-size: 12.8px; }
.tree { height: 139px; padding-top: 1px; overflow: hidden; color: #605e5c; font-size: 13.2px; letter-spacing: -0.35px; }
.tree li { height: 18.7px; display: flex; align-items: center; gap: 8px; white-space: nowrap; }
.car { fill: none; stroke: #b3b0ad; stroke-width: 1.2; }
.l1 { padding-left: 11px; } .l2 { padding-left: 33px; } .l3 { padding-left: 55px; } .l4 { padding-left: 77px; }
.lbar { position: absolute; left: 240px; top: 46px; width: 7px; height: 64px; background: #d2d0ce; }
.mp { font-size: 11px; fill: #4f4d4b; paint-order: stroke; stroke: #f4f2ee; stroke-width: 1.2px; }
.mp .road { font-size: 14px; fill: #6b6375; stroke: none; }
.mp .poi { font-size: 12px; fill: #766762; }
.mp .teal { font-size: 12px; fill: #35697f; }
.nh { font-size: 9px; font-weight: 700; fill: #333; }
.tiny { font: 8.500px "Liberation Sans", sans-serif; fill: #605e5c; }
.tiny.k { fill: #333; }
.tiny.u { fill: #4a5d9a; text-decoration: underline; }

/* filters pane */
.filters { border-left: 2px solid #b3b0ad; border-right: 1px solid #e1dfdd; background: #fff; letter-spacing: -0.15px; }
.filters header { height: 65px; display: flex; align-items: center; padding: 0 14px 9px 14px; }
.filters h2 { font-size: 17.5px; font-weight: 700; margin-left: 10px; flex: 1; letter-spacing: -0.5px; }
.filters header .chev { margin-left: 27px; stroke-width: 1.7; }
.fsearch { height: 39px; width: 214px; margin-left: 9px; border: 1px solid #a19f9d; border-radius: 2px; display: flex; align-items: center; gap: 11px; padding-left: 13px; padding-bottom: 1px; font-size: 15.2px; }
.fbody { margin-top: 5px; border-top: 1px solid #a19f9d; padding: 19px 9px 0 9px; }
.fbody h4 { font-weight: 400; font-size: 14.3px; height: 24px; line-height: 22px; margin-bottom: 9px; display: flex; justify-content: space-between; letter-spacing: -0.15px; }
.fbody h4 i { font-style: normal; padding-right: 5px; letter-spacing: 1.200px; }
.fbody h4.next { margin-top: 32px; margin-bottom: 8px; }
.card { height: 58px; border: 1px solid #c8c6c4; border-radius: 2px; margin-bottom: 7px; padding: 4px 10px; font-size: 14.3px; line-height: 23px; }
.card.add { text-align: center; padding-top: 17px; }

/* page tabs */
.pages { display: flex; letter-spacing: -0.45px; font-size: 14.5px; }
.arrows { width: 50px; display: flex; justify-content: space-between; padding: 16px 8px 0 7px; border-right: 1px solid #c8c6c4; fill: #bdbbb8; }
.pg { width: 95px; text-align: center; line-height: 45px; border-right: 1px solid #c8c6c4; }
.pg.on { background: #fff; box-shadow: inset 0 -5px #f2c811; color: #000; -webkit-text-stroke: 0.25px #000; }
.plus { background: #f2c811; width: 48px; height: 40px; margin: 2px 0 0 0; display: grid; place-items: center; }

/* visualizations pane */
.viz { border-left: 1px solid #e1dfdd; border-right: 1px solid #e1dfdd; height: 800px; overflow: hidden; }
.viz header, .fields header { height: 60px; display: flex; justify-content: space-between; padding: 20px 15px 0 15px; }
.viz h2, .fields h2 { font-size: 18.8px; line-height: 22px; font-weight: 600; color: #484644; letter-spacing: -0.15px; }
.viz header .chev, .fields header .chev { margin-top: 1px; }
.gallery { display: grid; grid-template-columns: repeat(6, 35px); grid-auto-rows: 30px; padding: 5px 0 0 7px; height: 210px; }
.gallery svg { width: 21px; height: 20px; overflow: visible; }
.gallery .sel { outline: 2px solid #605e5c; outline-offset: 2px; background: #d2d0ce; box-shadow: 0 0 0 3px #d2d0ce; }
.bl { fill: #83bdec; stroke: #1f6ab0; stroke-width: 1.3; }
.bl.hollow { fill: #fff; }
.gr { fill: #c8c6c4; stroke: #8a8886; stroke-width: 1.3; }
.wh { fill: #fff; stroke: #4a4846; stroke-width: 1.3; }
.or { fill: #f7a13d; stroke: #d9730d; stroke-width: 1; }
.ln { fill: none; stroke: #4a4846; stroke-width: 1.4; }
.n123 { font-size: 9.500px; fill: #1f78c1; }
.ry { font-size: 17px; font-weight: 700; fill: #2787c4; }
.modes { border-top: 1px solid #d8d6d4; height: 50px; display: flex; padding-left: 14px; }
.modes span { width: 50px; height: 46px; display: flex; justify-content: center; padding-top: 10px; }
.modes .on { box-shadow: inset 0 -5px #f2c811; border-radius: 3px; }
.vsearch { width: 207px; height: 38px; margin-left: 5px; background: #fff; border: 1px solid #c8c6c4; border-radius: 2px; display: flex; align-items: center; gap: 11px; padding-left: 14px; font-size: 15.3px; letter-spacing: -0.45px; }
.props { position: relative; margin-top: 9px; width: 218px; border-top: 1px solid #d8d6d4; height: 433px; }
.axis { height: 29px; display: flex; align-items: center; padding-left: 9px; border-bottom: 1px solid #dad8d6; font-size: 14.7px; letter-spacing: -0.35px; }
.axis.x { padding-bottom: 14px; }
.axis.y { height: 45px; background: #eaeae9; }
.axis span { width: 90px; margin-left: 9px; }
.axis em { font-style: normal; width: 24px; }
.toggle { width: 38px; height: 16px; background: radial-gradient(circle at 30px 8px, #605e5c 7.500px, transparent 8px), linear-gradient(#fff 0 0) 0 8px / 26px 1px no-repeat, linear-gradient(#605e5c 0 0) 0 7px / 26px 3px no-repeat; }
.form { padding: 10px 0 0 21px; width: 196px; }
.form label { display: block; height: 26px; line-height: 24px; font-size: 14.5px; letter-spacing: -0.35px; }
.select, .input, .fx { height: 30px; background: #fff; border: 1px solid #8a8886; border-radius: 2px; line-height: 27px; font-size: 14.5px; letter-spacing: -0.5px; }
.select { margin-bottom: 21.7px; padding: 0 11px 0 5px; display: flex; justify-content: space-between; align-items: center; }
.select svg { fill: none; stroke: #797775; }
.pair { display: grid; grid-template-columns: 139px 30px; gap: 5px; margin-bottom: 21.7px; }
.input { padding-left: 8px; color: #605e5c; border-color: #c8c6c4; }
.fx { border-color: #c8c6c4; text-align: center; font-family: "Liberation Serif", serif; font-style: italic; font-size: 16px; }
.bar { position: absolute; width: 7px; background: #d2d0ce; border-radius: 3px; }
.inner { left: 195px; top: 79px; height: 370px; }
.outer { left: 210px; top: 21px; height: 88px; background: rgba(190,188,184,.7); }

/* fields pane */
.fields header { padding-left: 16px; }
.dsearch { width: 215px; height: 33px; margin-left: 5px; background: #fff; border: 1px solid #605e5c; border-radius: 2px; display: flex; align-items: center; gap: 8px; padding-left: 9px; font-size: 16.6px; letter-spacing: -0.3px; color: #484644; }
.fields ul { margin-top: 8px; border-top: 1px solid #d8d6d4; padding-top: 11px; }
.fields li { height: 30px; display: flex; align-items: center; padding-left: 12px; font-size: 15px; letter-spacing: -0.42px; color: #3b3a39; }
.tb { position: relative; margin: 0 7px 0 6px; fill: none; stroke: #3b3a39; stroke-width: 1.300; }
.used::after { content: "✓"; position: absolute; left: 9px; top: 7px; width: 15px; height: 15px; border-radius: 50%; background: #f2c811; font: 700 10px/15px "DejaVu Sans", sans-serif; text-align: center; color: #252423; }

/* status and taskbar */
.status { border-top: 1px solid #d8d6d4; display: flex; justify-content: space-between; padding: 0 7px 0 6px; line-height: 30px; font-size: 14.7px; letter-spacing: -0.1px; color: #484644; white-space: nowrap; }
.status span + span { letter-spacing: -0.2px; }
.taskbar { background: #d3dbea; display: flex; color: #111; }
.start { width: 60px; display: grid; place-items: center; }
.tsearch { width: 429px; height: 50px; background: #fff; border: 1px solid #c0c4cb; display: flex; align-items: center; gap: 14px; padding-left: 14px; font-size: 18px; letter-spacing: -0.25px; }
.apps { display: flex; padding-left: 0; margin-left: 5px; }
.apps span { width: 51px; margin-right: 11px; display: grid; place-items: center; }
.apps .run { box-shadow: inset 0 -3px #0078d7; }
.apps .cur { width: 61px; background-color: #e9eef7; margin: 0 0 0 -4px; }
.pc { font-size: 11px; font-weight: 700; fill: #fff; }
.tray { display: flex; align-items: center; margin-left: 286px; flex: 1; border-right: 1px solid #aab3c2; margin-right: 5px; }
.wx { font-size: 17px; width: 174px; margin-left: 11px; padding-top: 2px; letter-spacing: -0.12px; white-space: nowrap; }
.s-cam { margin-left: 15px; } .s-cloud { margin-left: 11px; } .s-bat { margin-left: 11px; } .s-wifi { margin-left: 13px; } .s-vol { margin-left: 9px; }
.eng { font-size: 14.5px; width: 44px; margin-left: 14px; }
.clock { font-size: 14.5px; line-height: 23px; width: 78px; text-align: center; letter-spacing: -0.3px; white-space: nowrap; }
.note { margin-left: 19px; }
.two { font-size: 14px; font-weight: 600; }
```
